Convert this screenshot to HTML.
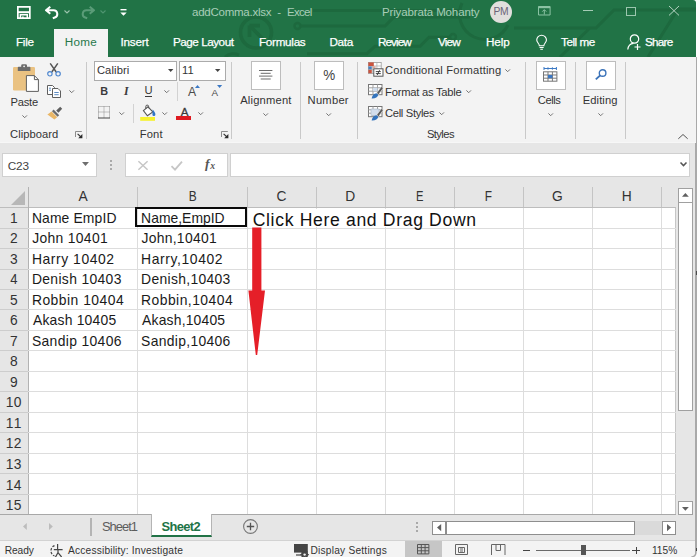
<!DOCTYPE html>
<html><head><meta charset="utf-8"><title>addComma.xlsx - Excel</title>
<style>
*{box-sizing:border-box;margin:0;padding:0}
html,body{width:700px;height:557px;overflow:hidden;background:#e6e6e6}
body{position:relative;font-family:"Liberation Sans",sans-serif;font-size:12px;color:#262626}
.a{position:absolute;white-space:pre}
svg{position:absolute;overflow:visible}
#title{left:0;top:0;width:696px;height:57px;background:#217346;border-top-right-radius:3px}
#hometab{left:54px;top:29px;width:54px;height:29px;background:#f3f3f3}
#ribbon{left:0;top:57px;width:696px;height:85.5px;background:#f3f3f3}
.sep{width:1px;background:#c9c9c9;top:61.8px;height:76.8px}
.box{background:#fff;border:1px solid #ababab}
.big{background:#fff;border:1px solid #bdbdbd;top:60.7px;height:29.2px;width:30px}
.gl{background:#dddddd}
.hl{background:#b5b5b5}
</style></head><body>
<div class="a" style="left:690px;top:0;width:6px;height:6px;background:#fdfdfd"></div>
<div id="title" class="a"></div>
<div class="a" style="left:696px;top:0;width:4px;height:557px;background:#fdfdfd"></div>
<div class="a" style="left:695.3px;top:57px;width:1.4px;height:500px;background:#a9a9a9"></div>
<svg style="left:0;top:0" width="696" height="57" viewBox="0 0 696 57" fill="none" stroke="#1d693e" stroke-width="3">
 <circle cx="256" cy="32.5" r="15.5" stroke-width="3.6"/><path d="M262.5 38.8 L250.5 26.5 M249.5 25.6 h10.5 M249.5 25.6 v11.5" stroke-width="3.6"/>
 <circle cx="297.5" cy="26" r="3" stroke-width="2.4"/>
 <path d="M300.5 26 H385 l9 -9 H470 M313 10.5 H462 M307 53.7 H367 l8 -7.5 H420 l9 -9 h22 M225 57 c4 -4 10 -4 14 -2"/>
 <circle cx="453" cy="37" r="3" stroke-width="2.4"/>
 <path d="M462 3 a24 24 0 0 0 46 22 M514 28 H596 l18 -18 H696 M560 57 l30 -29 M648 57 l30 -48 h18"/>
</svg>
<div id="hometab" class="a"></div>
<svg style="left:17.3px;top:6.4px" width="13.7" height="12.9" viewBox="0 0 13.7 12.9" fill="none" stroke="#fff"><path d="M0.85 0.85 h12 v11.2 h-12 z" stroke-width="1.7"/><path d="M0.85 6.2 h12" stroke-width="2"/><path d="M3.4 12 v-3.2 h6.9 v3.2" stroke-width="1.5"/><path d="M5.9 10.6 v1.8" stroke-width="1.6"/></svg>
<svg style="left:44px;top:5px" width="16" height="14" viewBox="0 0 16 14" fill="none" stroke="#fff" stroke-width="2"><path d="M6.3 1.8 L2 5.3 L6.3 8.8 M2.6 5.3 H9.6 a3.7 3.7 0 0 1 1.2 7.2 L8.8 13.2" stroke-linejoin="round"/></svg>
<svg style="left:64px;top:10px" width="6" height="4" viewBox="0 0 6 4" fill="none" stroke="#9cc4ad" stroke-width="1.1"><path d="M0.5 0.5 L3 3 L5.5 0.5"/></svg>
<svg style="left:80px;top:5px" width="16" height="14" viewBox="0 0 16 14" fill="none" stroke="#5a9c78" stroke-width="2"><path d="M9.7 1.8 L14 5.3 L9.7 8.8 M13.4 5.3 H6.4 a3.7 3.7 0 0 0 -1.2 7.2 L7.2 13.2" stroke-linejoin="round"/></svg>
<svg style="left:100px;top:10px" width="6" height="4" viewBox="0 0 6 4" fill="none" stroke="#4f9570" stroke-width="1.1"><path d="M0.5 0.5 L3 3 L5.5 0.5"/></svg>
<svg style="left:120px;top:9px" width="7" height="8" viewBox="0 0 7 8" fill="#fff"><rect x="0.5" y="0" width="6" height="1.4"/><path d="M0.3 3.4 h6.4 L3.5 6.8 z"/></svg>
<div class="a" style="left:192.00px;top:5.22px;font-size:11.5px;line-height:14px;color:#a9cdb8;letter-spacing:-0.250px;">addComma.xlsx</div>
<div class="a" style="left:277.30px;top:5.22px;font-size:11.5px;line-height:14px;color:#a9cdb8;">-</div>
<div class="a" style="left:287.00px;top:5.22px;font-size:11.5px;line-height:14px;color:#a9cdb8;letter-spacing:-0.700px;">Excel</div>
<div class="a" style="left:381.90px;top:5.22px;font-size:11.5px;line-height:14px;color:#a9cdb8;letter-spacing:-0.124px;">Priyabrata Mohanty</div>
<div class="a" style="left:490px;top:0.9px;width:22px;height:21.8px;border-radius:11px;background:#e1dfdd"></div>
<div class="a" style="left:493.40px;top:5.63px;font-size:10.3px;line-height:12px;color:#6b6478;letter-spacing:-0.200px;">PM</div>
<svg style="left:538.3px;top:6.3px" width="12.6" height="9.5" viewBox="0 0 12.6 9.5" fill="none" stroke="#8cc3a4" stroke-width="1"><path d="M0.5 0.5 h11.6 v8.5 h-11.6 z M6.3 8.5 v-4.5 M4.3 5.6 l2 -2 l2 2"/><path d="M0.5 1.3 h11.6" stroke-width="1.8"/></svg>
<div class="a" style="left:583px;top:10px;width:10.3px;height:1px;background:#a5ccb6"></div>
<div class="a" style="left:626px;top:6.5px;width:10px;height:9.2px;border:1px solid #9bc6ae"></div>
<svg style="left:669px;top:6.3px" width="10" height="9.4" viewBox="0 0 10 10" preserveAspectRatio="none" stroke="#b9d6c5" stroke-width="1"><path d="M0 0 L10 10 M10 0 L0 10"/></svg>
<div class="a" style="left:16.00px;top:35.25px;font-size:11.7px;line-height:14px;color:#fff;letter-spacing:-0.267px;-webkit-text-stroke:0.25px #fff;">File</div>
<div class="a" style="left:64.70px;top:35.25px;font-size:11.7px;line-height:14px;color:#27774b;letter-spacing:0.300px;">Home</div>
<div class="a" style="left:120.40px;top:35.25px;font-size:11.7px;line-height:14px;color:#fff;letter-spacing:-0.160px;-webkit-text-stroke:0.25px #fff;">Insert</div>
<div class="a" style="left:172.90px;top:35.25px;font-size:11.7px;line-height:14px;color:#fff;letter-spacing:-0.460px;-webkit-text-stroke:0.25px #fff;">Page Layout</div>
<div class="a" style="left:259.00px;top:35.25px;font-size:11.7px;line-height:14px;color:#fff;letter-spacing:-0.286px;-webkit-text-stroke:0.25px #fff;">Formulas</div>
<div class="a" style="left:329.50px;top:35.25px;font-size:11.7px;line-height:14px;color:#fff;letter-spacing:-0.333px;-webkit-text-stroke:0.25px #fff;">Data</div>
<div class="a" style="left:378.00px;top:35.25px;font-size:11.7px;line-height:14px;color:#fff;letter-spacing:-0.920px;-webkit-text-stroke:0.25px #fff;">Review</div>
<div class="a" style="left:438.00px;top:35.25px;font-size:11.7px;line-height:14px;color:#fff;letter-spacing:-0.833px;-webkit-text-stroke:0.25px #fff;">View</div>
<div class="a" style="left:486.00px;top:35.25px;font-size:11.7px;line-height:14px;color:#fff;letter-spacing:-0.133px;-webkit-text-stroke:0.25px #fff;">Help</div>
<svg style="left:536.4px;top:35.4px" width="11.2" height="15" viewBox="0 0 12 16" fill="none" stroke="#fff" stroke-width="1.2"><path d="M3.6 11.5 C3.6 9 0.8 8 0.8 5.4 a5.2 5.2 0 0 1 10.4 0 C11.2 8 8.4 9 8.4 11.5 z M3.8 13.3 h4.4 M4.6 15.2 h2.8"/></svg>
<div class="a" style="left:561.00px;top:35.25px;font-size:11.7px;line-height:14px;color:#fff;letter-spacing:-0.450px;-webkit-text-stroke:0.25px #fff;">Tell me</div>
<svg style="left:627px;top:34px" width="15" height="16" viewBox="0 0 15 16" fill="none" stroke="#fff" stroke-width="1.2"><circle cx="7.5" cy="5" r="4.2"/><path d="M0.8 15.5 C1.2 11.5 4 9.5 6.5 9.3 M10.5 10 v6 M7.5 13 h6"/></svg>
<div class="a" style="left:645.00px;top:35.25px;font-size:11.7px;line-height:14px;color:#fff;letter-spacing:-0.750px;-webkit-text-stroke:0.25px #fff;">Share</div>
<div id="ribbon" class="a"></div>
<div class="a" style="left:0;top:142.2px;width:696px;height:1px;background:#f7f7f7"></div>
<div class="a sep" style="left:85.9px"></div>
<div class="a sep" style="left:231.2px"></div>
<div class="a sep" style="left:299.7px"></div>
<div class="a sep" style="left:357.1px"></div>
<div class="a sep" style="left:524.6px"></div>
<div class="a sep" style="left:574.8px"></div>
<div class="a sep" style="left:624.9px"></div>
<svg style="left:12px;top:64px" width="28" height="29" viewBox="0 0 28 29">
<rect x="1" y="3" width="22" height="23.5" rx="1.2" fill="#eac282"/>
<path d="M5.8 7 V3.6 a0.8 0.8 0 0 1 0.8 -0.8 h2.6 V1.6 a1.4 1.4 0 0 1 1.4 -1.4 h3 a1.4 1.4 0 0 1 1.4 1.4 V2.8 h2.6 a0.8 0.8 0 0 1 0.8 0.8 V7 z" fill="#6b6b6b"/>
<circle cx="12.1" cy="2.3" r="0.9" fill="#f3f3f3"/>
<path d="M14.4 11.6 h8 l4 4 v11.8 h-12 z" fill="#fff" stroke="#5f5f5f" stroke-width="1"/>
<path d="M22.4 11.6 v4 h4" fill="none" stroke="#5f5f5f" stroke-width="1"/>
</svg>
<div class="a" style="left:10.60px;top:95.62px;font-size:11.2px;line-height:13px;color:#333;letter-spacing:-0.275px;">Paste</div>
<svg style="left:21.6px;top:115.4px" width="5.4" height="3.2" viewBox="0 0 5.4 3.2" fill="none" stroke="#707070" stroke-width="1"><path d="M0.4 0.4 L2.7 2.7 L5 0.4"/></svg>
<svg style="left:47px;top:63px" width="14" height="14" viewBox="0 0 14 14" fill="none">
<path d="M3.2 0.4 L9.2 9 M10.8 0.4 L4.8 9" stroke="#555" stroke-width="1.5"/>
<circle cx="2.9" cy="10.8" r="2.2" stroke="#4d86cf" stroke-width="1.15"/><circle cx="11.1" cy="10.8" r="2.2" stroke="#4d86cf" stroke-width="1.15"/>
</svg>
<svg style="left:47px;top:85px" width="14" height="13" viewBox="0 0 14 13" fill="#fff" stroke="#5f5f5f" stroke-width="1">
<path d="M0.5 0.5 h5 l2 2 v7 h-7 z"/><path d="M5.5 3.5 h5.5 l2.5 2.5 v6.5 h-8 z"/><path d="M7.3 7.5 h4.4 M7.3 9.7 h4.4" stroke="#4a7ebb" stroke-width="0.9"/><path d="M2 3.2 h2 M2 5.2 h2" stroke="#4a7ebb" stroke-width="0.9"/>
</svg>
<svg style="left:68.6px;top:89.8px" width="5.4" height="3.2" viewBox="0 0 5.4 3.2" fill="none" stroke="#707070" stroke-width="1"><path d="M0.4 0.4 L2.7 2.7 L5 0.4"/></svg>
<svg style="left:47px;top:106px" width="16" height="14" viewBox="0 0 16 14">
<path d="M9.2 4.6 L13.2 0.8 L15.2 2.8 L11.4 6.8 z" fill="#5f5f5f"/>
<path d="M6.6 3.6 L12.2 9.2 L10.6 10.8 L5 5.2 z" fill="#6b6b6b"/>
<path d="M4.6 5.6 L10.2 11.2 L7.4 13.6 L0.4 8.4 z" fill="#eab767"/>
</svg>
<div class="a" style="left:10.00px;top:127.92px;font-size:11.2px;line-height:13px;color:#333;letter-spacing:0.050px;">Clipboard</div>
<svg style="left:75.2px;top:131.2px" width="7.6" height="7.4" viewBox="0 0 7.6 7.4" fill="none"><path d="M0.5 6 V0.5 H6.8" stroke="#8c8c8c" stroke-width="1"/><path d="M2.6 2.8 L6 6" stroke="#333" stroke-width="1.1"/><path d="M7.4 3 V7.2 H3.2 z" fill="#2a2a2a"/></svg>
<div class="a box" style="left:94px;top:60.5px;width:83px;height:20px"></div>
<div class="a box" style="left:179px;top:60.5px;width:46.5px;height:20px"></div>
<div class="a" style="left:96.90px;top:64.12px;font-size:11.2px;line-height:13px;color:#333;letter-spacing:0.117px;">Calibri</div>
<div class="a" style="left:182.00px;top:64.12px;font-size:11.2px;line-height:13px;color:#333;">11</div>
<svg style="left:167.8px;top:69px" width="5.4" height="3" viewBox="0 0 5.4 3" fill="#444"><path d="M0 0 h5.4 L2.7 3 z"/></svg>
<svg style="left:214.9px;top:69px" width="5.4" height="3" viewBox="0 0 5.4 3" fill="#444"><path d="M0 0 h5.4 L2.7 3 z"/></svg>
<div class="a" style="left:99.50px;top:83.62px;font-size:11.5px;line-height:14px;color:#3b3b3b;font-weight:bold;transform:scaleX(0.943);transform-origin:4.5px 0;">B</div>
<div class="a" style="left:123.90px;top:83.51px;font-size:11.8px;line-height:14px;color:#3b3b3b;font-style:italic;font-family:'Liberation Serif', serif;font-weight:bold;">I</div>
<div class="a" style="left:144.55px;top:84.22px;font-size:11.2px;line-height:13px;color:#3b3b3b;">U</div>
<div class="a" style="left:145px;top:95.8px;width:7px;height:1px;background:#3b3b3b"></div>
<svg style="left:163.6px;top:90.2px" width="5.4" height="3.2" viewBox="0 0 5.4 3.2" fill="none" stroke="#707070" stroke-width="1"><path d="M0.4 0.4 L2.7 2.7 L5 0.4"/></svg>
<div class="a" style="left:176.7px;top:82px;width:1px;height:19px;background:#d2d2d2"></div>
<div class="a" style="left:188.05px;top:84.87px;font-size:12.2px;line-height:15px;color:#4a4a4a;">A</div>
<svg style="left:195.2px;top:84.7px" width="5" height="2.9" viewBox="0 0 5 2.9" fill="#3b78c4"><path d="M0 2.9 h5 L2.5 0 z"/></svg>
<div class="a" style="left:211.50px;top:87.20px;font-size:9.8px;line-height:12px;color:#4a4a4a;">A</div>
<svg style="left:216.6px;top:84.8px" width="5.2" height="2.9" viewBox="0 0 5.2 2.9" fill="#3b78c4"><path d="M0 0 h5.2 L2.6 2.9 z"/></svg>
<svg style="left:98px;top:106px" width="12" height="12.5" viewBox="0 0 12 12.5" fill="none" stroke="#8a8a8a" stroke-width="1">
<path d="M0.5 0.5 h11 M0.5 0.5 v11 M11.5 0.5 v11 M6 0.5 v11 M0.5 6 h11" stroke-dasharray="1 1"/><path d="M0 12 h12" stroke="#555" stroke-width="1.1"/></svg>
<svg style="left:118.7px;top:111.8px" width="5.4" height="3.2" viewBox="0 0 5.4 3.2" fill="none" stroke="#707070" stroke-width="1"><path d="M0.4 0.4 L2.7 2.7 L5 0.4"/></svg>
<div class="a" style="left:132.6px;top:104px;width:1px;height:19px;background:#d2d2d2"></div>
<svg style="left:140px;top:104.5px" width="16" height="16" viewBox="0 0 16 16">
<path d="M3.4 5.6 L8 1.8 L12.8 7 L7.4 10.8 z" fill="#fff" stroke="#555" stroke-width="1.1"/>
<path d="M5.8 3.8 V1.5 a1.4 1.4 0 0 1 2.8 0 V3.2" fill="none" stroke="#555" stroke-width="1"/>
<path d="M12.6 4.6 c1.8 1.8 2.8 3.6 2.8 4.8 a1.5 1.5 0 0 1 -3 0 c0 -1.2 0.4 -2.6 0.2 -4.8 z" fill="#2f74c6"/>
<rect x="0.2" y="12" width="14.8" height="3.8" fill="#f6f22e"/></svg>
<svg style="left:161.5px;top:111.8px" width="5.4" height="3.2" viewBox="0 0 5.4 3.2" fill="none" stroke="#707070" stroke-width="1"><path d="M0.4 0.4 L2.7 2.7 L5 0.4"/></svg>
<div class="a" style="left:180.70px;top:104.58px;font-size:11.6px;line-height:14px;color:#3c3c3c;-webkit-text-stroke:0.3px #3c3c3c;">A</div>
<div class="a" style="left:176.4px;top:116.4px;width:15px;height:3.8px;background:#de1a20"></div>
<svg style="left:197.8px;top:111.8px" width="5.4" height="3.2" viewBox="0 0 5.4 3.2" fill="none" stroke="#707070" stroke-width="1"><path d="M0.4 0.4 L2.7 2.7 L5 0.4"/></svg>
<div class="a" style="left:139.70px;top:127.92px;font-size:11.2px;line-height:13px;color:#333;letter-spacing:0.167px;">Font</div>
<svg style="left:220.8px;top:131.2px" width="7.6" height="7.4" viewBox="0 0 7.6 7.4" fill="none"><path d="M0.5 6 V0.5 H6.8" stroke="#8c8c8c" stroke-width="1"/><path d="M2.6 2.8 L6 6" stroke="#333" stroke-width="1.1"/><path d="M7.4 3 V7.2 H3.2 z" fill="#2a2a2a"/></svg>
<div class="a big" style="left:251px"></div>
<svg style="left:259.3px;top:69.9px" width="13.4" height="10" viewBox="0 0 13.4 10" stroke="#6a6a6a" stroke-width="1"><path d="M0 0.5 h13.4 M1.7 3.3 h10 M0 6.1 h13.4 M1.7 9 h10"/></svg>
<div class="a" style="left:240.20px;top:94.32px;font-size:11.2px;line-height:13px;color:#333;letter-spacing:0.188px;">Alignment</div>
<svg style="left:263.2px;top:113.1px" width="5.4" height="3.2" viewBox="0 0 5.4 3.2" fill="none" stroke="#707070" stroke-width="1"><path d="M0.4 0.4 L2.7 2.7 L5 0.4"/></svg>
<div class="a big" style="left:313.6px"></div>
<div class="a" style="left:323.15px;top:66.85px;font-size:14px;line-height:17px;color:#3f3f3f;transform:scaleX(0.958);transform-origin:6.0px 0;">%</div>
<div class="a" style="left:307.60px;top:94.32px;font-size:11.2px;line-height:13px;color:#333;letter-spacing:0.240px;">Number</div>
<svg style="left:325.9px;top:113.1px" width="5.4" height="3.2" viewBox="0 0 5.4 3.2" fill="none" stroke="#707070" stroke-width="1"><path d="M0.4 0.4 L2.7 2.7 L5 0.4"/></svg>
<svg style="left:367.6px;top:62.3px" width="15.4" height="14.6" viewBox="0 0 15.4 14.6">
<rect x="0.4" y="0.4" width="12.8" height="11" fill="#fff" stroke="#9a9a9a" stroke-width="0.8"/><path d="M0.4 4 h12.8 M0.4 7.6 h12.8 M4.6 0.4 v11 M8.9 0.4 v11" stroke="#b0b0b0" stroke-width="0.8" fill="none"/>
<rect x="0.4" y="0.4" width="5.4" height="3.6" fill="#c9543f"/><rect x="0.4" y="4.4" width="3.4" height="3" fill="#4a7ebb"/><rect x="0.4" y="7.8" width="3.4" height="3.4" fill="#c9543f"/><rect x="4.6" y="4.2" width="3" height="2" fill="#dca79c"/>
<rect x="5.8" y="6.8" width="9.2" height="7.4" fill="#fff" stroke="#555" stroke-width="1"/><path d="M7.8 9.6 h5 M7.8 11.6 h5 M11.6 8.2 L9.2 13" stroke="#333" stroke-width="0.9" fill="none"/></svg>
<div class="a" style="left:385.10px;top:64.32px;font-size:11.2px;line-height:13px;color:#333;letter-spacing:0.171px;">Conditional Formatting</div>
<svg style="left:504.9px;top:68.7px" width="5.4" height="3.2" viewBox="0 0 5.4 3.2" fill="none" stroke="#707070" stroke-width="1"><path d="M0.4 0.4 L2.7 2.7 L5 0.4"/></svg>
<svg style="left:367.6px;top:84.4px" width="15.4" height="14.6" viewBox="0 0 15.4 14.6">
<rect x="0.5" y="0.5" width="13.5" height="10.2" fill="#fff" stroke="#777"/><path d="M0.5 3.8 h13.5 M0.5 7.2 h13.5 M5 0.5 v10.2 M9.5 0.5 v10.2" stroke="#a0a0a0" fill="none"/><rect x="5" y="3.8" width="4.5" height="3.4" fill="#cfdcec"/>
<path d="M8.6 9 L13.4 2.6 L15.4 4 L10.6 10.6 z" fill="#5a5a5a" stroke="#f3f3f3" stroke-width="0.6"/><path d="M3.6 14.4 c0.6 -3 2.2 -4.8 4.8 -5.2 l2 1.6 c-0.6 2.6 -3.2 3.8 -6.8 3.6 z" fill="#3474bd"/></svg>
<div class="a" style="left:385.10px;top:85.52px;font-size:11.2px;line-height:13px;color:#333;letter-spacing:-0.236px;">Format as Table</div>
<svg style="left:466.0px;top:90.3px" width="5.4" height="3.2" viewBox="0 0 5.4 3.2" fill="none" stroke="#707070" stroke-width="1"><path d="M0.4 0.4 L2.7 2.7 L5 0.4"/></svg>
<svg style="left:367.6px;top:105.6px" width="15.4" height="14.6" viewBox="0 0 15.4 14.6">
<rect x="0.5" y="0.5" width="13.5" height="10.2" fill="#fff" stroke="#777"/><path d="M0.5 3.8 h13.5 M0.5 7.2 h13.5 M5 0.5 v10.2 M9.5 0.5 v10.2" stroke="#a0a0a0" fill="none"/><rect x="3" y="3" width="8" height="6.5" fill="#d3deec" stroke="#a8b4c4" stroke-width="0.6"/>
<path d="M8.6 9 L13.4 2.6 L15.4 4 L10.6 10.6 z" fill="#5a5a5a" stroke="#f3f3f3" stroke-width="0.6"/><path d="M3.6 14.4 c0.6 -3 2.2 -4.8 4.8 -5.2 l2 1.6 c-0.6 2.6 -3.2 3.8 -6.8 3.6 z" fill="#3474bd"/></svg>
<div class="a" style="left:385.10px;top:106.62px;font-size:11.2px;line-height:13px;color:#333;letter-spacing:-0.340px;">Cell Styles</div>
<svg style="left:438.8px;top:111.8px" width="5.4" height="3.2" viewBox="0 0 5.4 3.2" fill="none" stroke="#707070" stroke-width="1"><path d="M0.4 0.4 L2.7 2.7 L5 0.4"/></svg>
<div class="a" style="left:426.90px;top:127.92px;font-size:11.2px;line-height:13px;color:#333;letter-spacing:-0.560px;">Styles</div>
<div class="a big" style="left:536px"></div>
<svg style="left:543px;top:67.3px" width="14.4" height="14.8" viewBox="0 0 14.4 14.8" fill="none">
<path d="M1 0 v3 M13.4 0 v3 M1 1.5 h12.4 M5 0.3 v2.4 M9.4 0.3 v2.4" stroke="#3b78c4" stroke-width="1"/>
<rect x="0.5" y="4.8" width="13.4" height="9.4" fill="#fff" stroke="#777"/><path d="M0.5 8 h13.4 M0.5 11.2 h13.4 M5 4.8 v9.4 M9.4 4.8 v9.4" stroke="#777"/>
<rect x="5" y="8" width="4.4" height="3.2" fill="#3b78c4"/></svg>
<div class="a" style="left:537.80px;top:94.32px;font-size:11.2px;line-height:13px;color:#333;letter-spacing:-0.425px;">Cells</div>
<svg style="left:548.2px;top:113.1px" width="5.4" height="3.2" viewBox="0 0 5.4 3.2" fill="none" stroke="#707070" stroke-width="1"><path d="M0.4 0.4 L2.7 2.7 L5 0.4"/></svg>
<div class="a big" style="left:586.2px"></div>
<svg style="left:594.5px;top:69.2px" width="11.8" height="11" viewBox="0 0 11.8 11" fill="none" stroke="#3b73b9"><circle cx="7.6" cy="4" r="3.3" stroke-width="1.4"/><path d="M5.2 6.4 L0.8 10.4" stroke-width="1.9"/></svg>
<div class="a" style="left:582.80px;top:94.32px;font-size:11.2px;line-height:13px;color:#333;letter-spacing:0.067px;">Editing</div>
<svg style="left:598.3px;top:113.1px" width="5.4" height="3.2" viewBox="0 0 5.4 3.2" fill="none" stroke="#707070" stroke-width="1"><path d="M0.4 0.4 L2.7 2.7 L5 0.4"/></svg>
<svg style="left:677.6px;top:134px" width="10" height="5" viewBox="0 0 10 5" fill="none" stroke="#555" stroke-width="1"><path d="M0.3 4.8 L5 0.5 L9.7 4.8"/></svg>
<div class="a" style="left:2.1px;top:153.2px;width:94.5px;height:23.5px;background:#fff;border:1px solid #d0d0d0"></div>
<div class="a" style="left:7.80px;top:158.51px;font-size:11.8px;line-height:14px;color:#444;letter-spacing:-0.200px;">C23</div>
<svg style="left:82px;top:162.1px" width="7" height="3.9" viewBox="0 0 6.4 3.6" fill="#6e6e6e"><path d="M0 0 h6.4 L3.2 3.6 z"/></svg>
<div class="a" style="left:110px;top:160px;width:2px;height:2px;background:#a9a9a9"></div>
<div class="a" style="left:110px;top:164px;width:2px;height:2px;background:#a9a9a9"></div>
<div class="a" style="left:110px;top:168px;width:2px;height:2px;background:#a9a9a9"></div>
<div class="a" style="left:124.7px;top:153.2px;width:103px;height:23.5px;background:#fff;border:1px solid #d0d0d0"></div>
<svg style="left:137.5px;top:160.6px" width="10" height="9" viewBox="0 0 10 9" stroke="#c6c6c6" stroke-width="1.5" fill="none"><path d="M0.4 0.2 L9.6 8.8 M9.6 0.2 L0.4 8.8"/></svg>
<svg style="left:171px;top:160.6px" width="11.6" height="9.4" viewBox="0 0 11.6 9.4" stroke="#c6c6c6" stroke-width="1.8" fill="none"><path d="M0.5 5.2 L4 8.6 L11 0.6"/></svg>
<div class="a" style="left:205.05px;top:155.52px;font-size:13.5px;line-height:16px;color:#555;font-weight:bold;font-style:italic;font-family:'Liberation Serif', serif;transform:scaleX(1);">f</div>
<div class="a" style="left:210.15px;top:159.67px;font-size:9.6px;line-height:12px;color:#555;font-weight:bold;font-style:italic;font-family:'Liberation Serif', serif;transform:scaleX(1);">x</div>
<div class="a" style="left:230.3px;top:153.2px;width:460.2px;height:23.5px;background:#fff;border:1px solid #d0d0d0"></div>
<svg style="left:679.5px;top:162.4px" width="7" height="4.4" viewBox="0 0 7 4.4" fill="none" stroke="#555" stroke-width="1.5"><path d="M0.5 0.5 L3.5 3.6 L6.5 0.5"/></svg>
<div class="a" style="left:28.4px;top:207.6px;width:647.2px;height:306.8px;background:#fff"></div>
<div class="a" style="left:0;top:207.0px;width:675.6px;height:1px;background:#bdbdbd"></div>
<div class="a" style="left:27.9px;top:187px;width:1px;height:327.4px;background:#b2b2b2"></div>
<div class="a" style="left:675.1px;top:207.6px;width:1px;height:306.8px;background:#c6c6c6"></div>
<div class="a" style="left:0;top:513.9px;width:676.1px;height:1px;background:#a8a8a8"></div>
<div class="a" style="left:136.6px;top:187px;width:1px;height:20px;background:#c4c4c4"></div>
<div class="a gl" style="left:136.6px;top:207.6px;width:1px;height:306.8px"></div>
<div class="a" style="left:246.5px;top:187px;width:1px;height:20px;background:#c4c4c4"></div>
<div class="a gl" style="left:246.5px;top:207.6px;width:1px;height:306.8px"></div>
<div class="a" style="left:315.8px;top:187px;width:1px;height:20px;background:#c4c4c4"></div>
<div class="a gl" style="left:315.8px;top:207.6px;width:1px;height:306.8px"></div>
<div class="a" style="left:384.9px;top:187px;width:1px;height:20px;background:#c4c4c4"></div>
<div class="a gl" style="left:384.9px;top:207.6px;width:1px;height:306.8px"></div>
<div class="a" style="left:454.0px;top:187px;width:1px;height:20px;background:#c4c4c4"></div>
<div class="a gl" style="left:454.0px;top:207.6px;width:1px;height:306.8px"></div>
<div class="a" style="left:523.0px;top:187px;width:1px;height:20px;background:#c4c4c4"></div>
<div class="a gl" style="left:523.0px;top:207.6px;width:1px;height:306.8px"></div>
<div class="a" style="left:592.1px;top:187px;width:1px;height:20px;background:#c4c4c4"></div>
<div class="a gl" style="left:592.1px;top:207.6px;width:1px;height:306.8px"></div>
<div class="a" style="left:661.1px;top:187px;width:1px;height:20px;background:#c4c4c4"></div>
<div class="a gl" style="left:661.1px;top:207.6px;width:1px;height:306.8px"></div>
<div class="a gl" style="left:28.4px;top:227.6px;width:647.2px;height:1px"></div>
<div class="a" style="left:0;top:227.6px;width:28px;height:1px;background:#cdcdcd"></div>
<div class="a gl" style="left:28.4px;top:248.0px;width:647.2px;height:1px"></div>
<div class="a" style="left:0;top:248.0px;width:28px;height:1px;background:#cdcdcd"></div>
<div class="a gl" style="left:28.4px;top:268.5px;width:647.2px;height:1px"></div>
<div class="a" style="left:0;top:268.5px;width:28px;height:1px;background:#cdcdcd"></div>
<div class="a gl" style="left:28.4px;top:289.0px;width:647.2px;height:1px"></div>
<div class="a" style="left:0;top:289.0px;width:28px;height:1px;background:#cdcdcd"></div>
<div class="a gl" style="left:28.4px;top:309.4px;width:647.2px;height:1px"></div>
<div class="a" style="left:0;top:309.4px;width:28px;height:1px;background:#cdcdcd"></div>
<div class="a gl" style="left:28.4px;top:329.9px;width:647.2px;height:1px"></div>
<div class="a" style="left:0;top:329.9px;width:28px;height:1px;background:#cdcdcd"></div>
<div class="a gl" style="left:28.4px;top:350.4px;width:647.2px;height:1px"></div>
<div class="a" style="left:0;top:350.4px;width:28px;height:1px;background:#cdcdcd"></div>
<div class="a gl" style="left:28.4px;top:370.8px;width:647.2px;height:1px"></div>
<div class="a" style="left:0;top:370.8px;width:28px;height:1px;background:#cdcdcd"></div>
<div class="a gl" style="left:28.4px;top:391.3px;width:647.2px;height:1px"></div>
<div class="a" style="left:0;top:391.3px;width:28px;height:1px;background:#cdcdcd"></div>
<div class="a gl" style="left:28.4px;top:411.8px;width:647.2px;height:1px"></div>
<div class="a" style="left:0;top:411.8px;width:28px;height:1px;background:#cdcdcd"></div>
<div class="a gl" style="left:28.4px;top:432.2px;width:647.2px;height:1px"></div>
<div class="a" style="left:0;top:432.2px;width:28px;height:1px;background:#cdcdcd"></div>
<div class="a gl" style="left:28.4px;top:452.7px;width:647.2px;height:1px"></div>
<div class="a" style="left:0;top:452.7px;width:28px;height:1px;background:#cdcdcd"></div>
<div class="a gl" style="left:28.4px;top:473.2px;width:647.2px;height:1px"></div>
<div class="a" style="left:0;top:473.2px;width:28px;height:1px;background:#cdcdcd"></div>
<div class="a gl" style="left:28.4px;top:493.7px;width:647.2px;height:1px"></div>
<div class="a" style="left:0;top:493.7px;width:28px;height:1px;background:#cdcdcd"></div>
<svg style="left:11px;top:191px" width="14" height="14" viewBox="0 0 14 14" fill="#b7b7b7"><path d="M14 0 V14 H0 z"/></svg>
<div class="a" style="left:78.60px;top:188.32px;font-size:13.8px;line-height:17px;color:#333;">A</div>
<div class="a" style="left:187.85px;top:188.32px;font-size:13.8px;line-height:17px;color:#333;transform:scaleX(0.863);transform-origin:5.0px 0;">B</div>
<div class="a" style="left:276.50px;top:188.32px;font-size:13.8px;line-height:17px;color:#333;">C</div>
<div class="a" style="left:345.25px;top:188.32px;font-size:13.8px;line-height:17px;color:#333;">D</div>
<div class="a" style="left:414.75px;top:188.32px;font-size:13.8px;line-height:17px;color:#333;transform:scaleX(0.812);transform-origin:5.0px 0;">E</div>
<div class="a" style="left:484.30px;top:188.32px;font-size:13.8px;line-height:17px;color:#333;transform:scaleX(0.857);transform-origin:4.5px 0;">F</div>
<div class="a" style="left:551.90px;top:188.32px;font-size:13.8px;line-height:17px;color:#333;">G</div>
<div class="a" style="left:621.70px;top:188.32px;font-size:13.8px;line-height:17px;color:#333;">H</div>
<div class="a" style="left:9.90px;top:209.57px;font-size:13.8px;line-height:17px;color:#333;">1</div>
<div class="a" style="left:9.90px;top:230.10px;font-size:13.8px;line-height:17px;color:#333;">2</div>
<div class="a" style="left:9.90px;top:250.64px;font-size:13.8px;line-height:17px;color:#333;">3</div>
<div class="a" style="left:10.40px;top:271.17px;font-size:13.8px;line-height:17px;color:#333;transform:scaleX(0.943);transform-origin:3.5px 0;">4</div>
<div class="a" style="left:9.90px;top:291.71px;font-size:13.8px;line-height:17px;color:#333;">5</div>
<div class="a" style="left:9.90px;top:312.24px;font-size:13.8px;line-height:17px;color:#333;">6</div>
<div class="a" style="left:9.90px;top:332.78px;font-size:13.8px;line-height:17px;color:#333;">7</div>
<div class="a" style="left:9.90px;top:353.31px;font-size:13.8px;line-height:17px;color:#333;">8</div>
<div class="a" style="left:9.90px;top:373.85px;font-size:13.8px;line-height:17px;color:#333;">9</div>
<div class="a" style="left:5.80px;top:394.38px;font-size:13.8px;line-height:17px;color:#333;letter-spacing:0.200px;">10</div>
<div class="a" style="left:5.80px;top:414.92px;font-size:13.8px;line-height:17px;color:#333;letter-spacing:1.200px;">11</div>
<div class="a" style="left:5.80px;top:435.45px;font-size:13.8px;line-height:17px;color:#333;letter-spacing:0.200px;">12</div>
<div class="a" style="left:5.80px;top:455.99px;font-size:13.8px;line-height:17px;color:#333;letter-spacing:0.200px;">13</div>
<div class="a" style="left:5.80px;top:476.52px;font-size:13.8px;line-height:17px;color:#333;letter-spacing:0.200px;">14</div>
<div class="a" style="left:5.80px;top:497.06px;font-size:13.8px;line-height:17px;color:#333;letter-spacing:0.200px;">15</div>
<div class="a" style="left:31.90px;top:209.53px;font-size:13.9px;line-height:17px;color:#1a1a1a;letter-spacing:0.133px;">Name EmpID</div>
<div class="a" style="left:32.20px;top:230.07px;font-size:13.9px;line-height:17px;color:#1a1a1a;letter-spacing:0.322px;">John 10401</div>
<div class="a" style="left:31.90px;top:250.60px;font-size:13.9px;line-height:17px;color:#1a1a1a;letter-spacing:0.570px;">Harry 10402</div>
<div class="a" style="left:31.90px;top:271.14px;font-size:13.9px;line-height:17px;color:#1a1a1a;letter-spacing:0.345px;">Denish 10403</div>
<div class="a" style="left:31.90px;top:291.67px;font-size:13.9px;line-height:17px;color:#1a1a1a;letter-spacing:0.482px;">Robbin 10404</div>
<div class="a" style="left:32.90px;top:312.21px;font-size:13.9px;line-height:17px;color:#1a1a1a;letter-spacing:0.220px;">Akash 10405</div>
<div class="a" style="left:31.90px;top:332.74px;font-size:13.9px;line-height:17px;color:#1a1a1a;letter-spacing:0.345px;">Sandip 10406</div>
<div class="a" style="left:141.10px;top:209.53px;font-size:13.9px;line-height:17px;color:#1a1a1a;letter-spacing:0.022px;">Name,EmpID</div>
<div class="a" style="left:141.40px;top:230.07px;font-size:13.9px;line-height:17px;color:#1a1a1a;letter-spacing:0.300px;">John,10401</div>
<div class="a" style="left:141.10px;top:250.60px;font-size:13.9px;line-height:17px;color:#1a1a1a;letter-spacing:0.600px;">Harry,10402</div>
<div class="a" style="left:141.10px;top:271.14px;font-size:13.9px;line-height:17px;color:#1a1a1a;letter-spacing:0.318px;">Denish,10403</div>
<div class="a" style="left:141.10px;top:291.67px;font-size:13.9px;line-height:17px;color:#1a1a1a;letter-spacing:0.455px;">Robbin,10404</div>
<div class="a" style="left:142.10px;top:312.21px;font-size:13.9px;line-height:17px;color:#1a1a1a;letter-spacing:0.190px;">Akash,10405</div>
<div class="a" style="left:141.10px;top:332.74px;font-size:13.9px;line-height:17px;color:#1a1a1a;letter-spacing:0.318px;">Sandip,10406</div>
<div class="a" style="left:248.5px;top:208.5px;width:228px;height:18px;background:#fff"></div>
<div class="a" style="left:252.70px;top:209.90px;font-size:17.6px;line-height:21px;color:#111;letter-spacing:0.657px;">Click Here and Drag Down</div>
<div class="a" style="left:135.4px;top:206.9px;width:112.1px;height:20.3px;border:2.4px solid #0a0a0a"></div>
<svg style="left:0;top:0" width="700" height="557" viewBox="0 0 700 557"><path d="M252.2 227.5 H261.4 V290.4 H265 L257.2 355 H255.8 L248.4 290.4 H252.2 z" fill="#e51f28"/></svg>
<div class="a" style="left:678.1px;top:188.1px;width:14.5px;height:14.5px;background:#fff;border:1px solid #a0a0a0"></div>
<svg style="left:682px;top:193.1px" width="6.8" height="3.8" viewBox="0 0 6.8 3.8" fill="#606060"><path d="M0 3.8 h6.8 L3.4 0 z"/></svg>
<div class="a" style="left:678.1px;top:202px;width:14.5px;height:209.4px;background:#fff;border:1px solid #a0a0a0"></div>
<div class="a" style="left:678.1px;top:500.6px;width:14.5px;height:14.2px;background:#fff;border:1px solid #a0a0a0"></div>
<svg style="left:682px;top:506.6px" width="6.8" height="3.8" viewBox="0 0 6.8 3.8" fill="#606060"><path d="M0 0 h6.8 L3.4 3.8 z"/></svg>
<svg style="left:22.6px;top:523px" width="3.8" height="7" viewBox="0 0 3.8 7" fill="#bcbcbc"><path d="M3.8 0 V7 L0 3.5 z"/></svg>
<svg style="left:48.9px;top:523px" width="3.8" height="7" viewBox="0 0 3.8 7" fill="#bcbcbc"><path d="M0 0 V7 L3.8 3.5 z"/></svg>
<div class="a" style="left:90.2px;top:518px;width:1.4px;height:18px;background:#b4b4b4"></div>
<div class="a" style="left:101.90px;top:519.23px;font-size:12.9px;line-height:15px;color:#5c5c5c;letter-spacing:-0.960px;">Sheet1</div>
<div class="a" style="left:151.2px;top:514.3px;width:60.6px;height:23px;background:#fff;border-left:1px solid #b4b4b4;border-right:1px solid #b4b4b4;border-bottom:2px solid #217346"></div>
<div class="a" style="left:161.60px;top:519.23px;font-size:12.9px;line-height:15px;color:#217346;letter-spacing:-0.640px;font-weight:bold;">Sheet2</div>
<svg style="left:242.6px;top:519.4px" width="15" height="15" viewBox="0 0 15 15" fill="none" stroke="#777" stroke-width="1.1"><circle cx="7.5" cy="7.5" r="6.9"/><path d="M7.5 3.8 v7.4 M3.8 7.5 h7.4" stroke="#555" stroke-width="1.3"/></svg>
<div class="a" style="left:416px;top:522px;width:2px;height:2px;background:#a9a9a9"></div>
<div class="a" style="left:416px;top:526px;width:2px;height:2px;background:#a9a9a9"></div>
<div class="a" style="left:416px;top:530px;width:2px;height:2px;background:#a9a9a9"></div>
<div class="a" style="left:635px;top:520.6px;width:27px;height:14.1px;background:#dadada"></div>
<div class="a" style="left:432px;top:520.6px;width:14.4px;height:14.1px;background:#fff;border:1px solid #8e8e8e"></div>
<svg style="left:436.9px;top:524.2px" width="4.2" height="7.2" viewBox="0 0 4.2 7.2" fill="#606060"><path d="M4.2 0 V7.2 L0 3.6 z"/></svg>
<div class="a" style="left:445.8px;top:520.6px;width:189.4px;height:14.1px;background:#fff;border:1px solid #8e8e8e"></div>
<div class="a" style="left:661.6px;top:520.6px;width:14.4px;height:14.1px;background:#fff;border:1px solid #8e8e8e"></div>
<svg style="left:667.3px;top:524.2px" width="4.2" height="7.2" viewBox="0 0 4.2 7.2" fill="#606060"><path d="M0 0 V7.2 L4.2 3.6 z"/></svg>
<div class="a" style="left:0;top:540px;width:695px;height:17px;background:#f3f3f3;border-top:1px solid #d2d2d2"></div>
<div class="a" style="left:4.70px;top:544.87px;font-size:10.2px;line-height:12px;color:#333;letter-spacing:-0.075px;">Ready</div>
<svg style="left:50px;top:543.5px" width="15" height="14" viewBox="0 0 15 14" fill="none" stroke="#444" stroke-width="1.2"><path d="M4.5 1.6 A5.6 5.6 0 0 0 4.5 12" stroke-dasharray="2.4 1.4"/><path d="M7.6 0 V5.4 M3.8 5.6 H12.6 M8 5.6 V8.6 L5.2 13.6 M8 8.6 L11.6 13" /></svg>
<div class="a" style="left:68.10px;top:544.87px;font-size:10.2px;line-height:12px;color:#333;letter-spacing:0.172px;">Accessibility: Investigate</div>
<svg style="left:294.2px;top:543.6px" width="15" height="14" viewBox="0 0 15 14"><rect x="0" y="0" width="13.8" height="8.6" fill="#444"/><path d="M2 11 h5" stroke="#444" stroke-width="1.2"/><circle cx="10.6" cy="10.6" r="2.7" fill="#f3f3f3" stroke="#444" stroke-width="1.6"/><path d="M10.6 6.4 v8.4 M6.4 10.6 h8.4 M7.6 7.6 l6 6 M13.6 7.6 l-6 6" stroke="#444" stroke-width="1.1"/><circle cx="10.6" cy="10.6" r="1.2" fill="#f3f3f3"/></svg>
<div class="a" style="left:310.40px;top:544.87px;font-size:10.2px;line-height:12px;color:#333;letter-spacing:0.220px;">Display Settings</div>
<div class="a" style="left:405.2px;top:540.5px;width:36.8px;height:16.5px;background:#c6c6c6"></div>
<svg style="left:416.8px;top:544.1px" width="12.4" height="10.4" viewBox="0 0 12.4 10.4" fill="none" stroke="#555" stroke-width="1"><path d="M0.5 0.5 h11.4 v9.4 h-11.4 z M0.5 3.6 h11.4 M0.5 6.8 h11.4 M4.3 0.5 v9.4 M8.1 0.5 v9.4"/></svg>
<svg style="left:454.9px;top:544px" width="13" height="11" viewBox="0 0 13 11" fill="none" stroke="#666" stroke-width="1"><path d="M0.5 0.5 h12 v10 h-12 z"/><path d="M3.5 3.5 h6 v5 h-6 z M5 5 h3 M5 7 h3"/></svg>
<svg style="left:491.3px;top:544px" width="14.5" height="11" viewBox="0 0 14.5 11" fill="none" stroke="#666" stroke-width="1"><path d="M0.5 11 V0.5 h13.5 V11 M5 0.5 v6 h4.5 v-6"/></svg>
<div class="a" style="left:522.5px;top:549.9px;width:7.4px;height:1px;background:#444"></div>
<div class="a" style="left:535.5px;top:549.9px;width:94px;height:1px;background:#6a6a6a"></div>
<div class="a" style="left:581.4px;top:545px;width:4.6px;height:10.4px;background:#555"></div>
<div class="a" style="left:632.4px;top:549.9px;width:7.4px;height:1px;background:#444"></div>
<div class="a" style="left:635.6px;top:546.7px;width:1px;height:7.4px;background:#444"></div>
<div class="a" style="left:651.90px;top:544.87px;font-size:10.2px;line-height:12px;color:#333;letter-spacing:0.033px;">115%</div>
<svg style="left:688px;top:549px" width="12" height="8" viewBox="0 0 12 8"><path d="M8 0 V3 Q8 8 3 8 H12 V0 z" fill="#fdfdfd"/><path d="M8 0 V3 Q8 7.6 3.4 8" fill="none" stroke="#a9a9a9" stroke-width="1.4"/></svg>
<div class="a" style="left:695.9px;top:271.2px;width:1.2px;height:4.2px;background:#4a4a4a"></div>
<div class="a" style="left:695.7px;top:548px;width:1.1px;height:3.4px;background:#4a4a4a"></div>
</body></html>
